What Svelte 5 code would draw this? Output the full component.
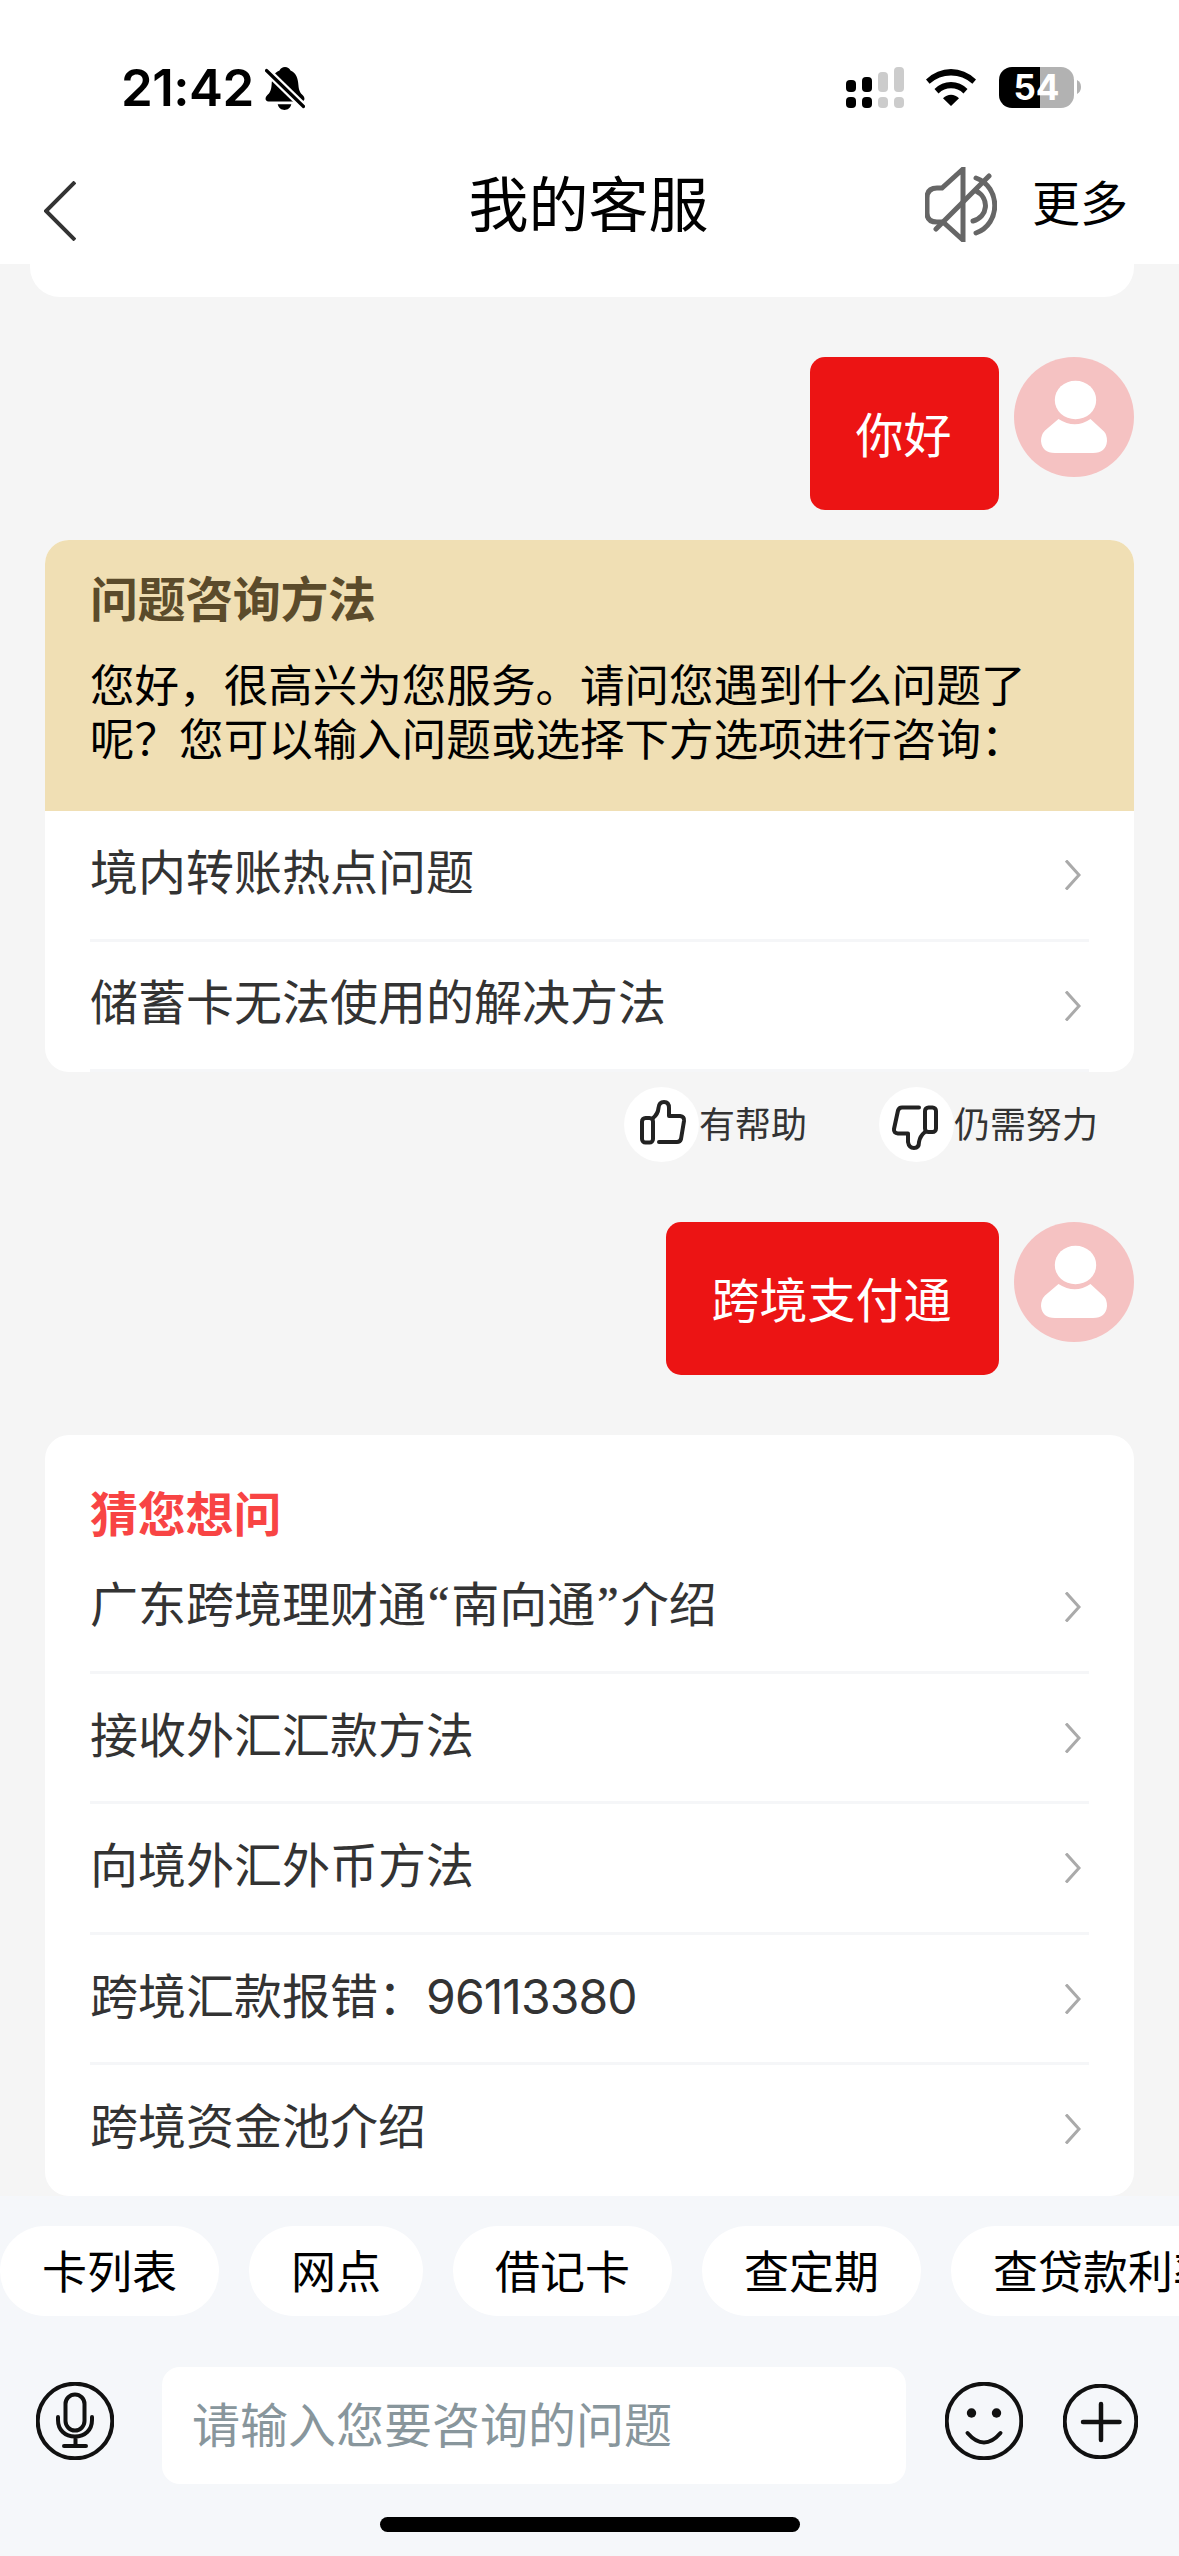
<script lang="ts">
  const greetingOptions = ["境内转账热点问题", "储蓄卡无法使用的解决方法"];

  const suggestions = [
    "广东跨境理财通“南向通”介绍",
    "接收外汇汇款方法",
    "向境外汇外币方法",
    "跨境汇款报错：96113380",
    "跨境资金池介绍",
  ];

  const shortcuts = ["卡列表", "网点", "借记卡", "查定期", "查贷款利率"];

  // Quotes and digits get their own spacing next to the Chinese glyphs.
  function splitRuns(text: string) {
    return text
      .split(/(\d+|[“”])/)
      .filter((part) => part !== "")
      .map((part) => ({
        text: part,
        quote: /[“”]/.test(part),
        digits: /\d/.test(part),
      }));
  }
</script>

{#snippet userMessage(text: string)}
  <div class="message">
    <div class="bubble">{text}</div>
    <svg class="avatar" viewBox="0 0 120 120" aria-hidden="true">
      <circle cx="60" cy="60" r="60" fill="#f5c2c2" />
      <ellipse cx="61.5" cy="43" rx="20.7" ry="19.3" fill="#fff" />
      <path
        d="M44.500 62 Q61 72.500 76.500 62 L90 74.500 Q93 77.500 93 84 Q92 96 79 96 H41 Q28 96 27 84 Q27 77.500 31 73.500 Z"
        fill="#fff"
      />
    </svg>
  </div>
{/snippet}

{#snippet optionRows(items: string[])}
  <ul class="options">
    {#each items as item}
      <li>
        <div class="label">
          {#each splitRuns(item) as run}<span class:quote={run.quote} class:digits={run.digits}>{run.text}</span>{/each}
        </div>
        <svg class="chevron" viewBox="0 0 16 30" aria-hidden="true">
          <path d="M1 .5 14 15 1 29.500" />
        </svg>
      </li>
    {/each}
  </ul>
{/snippet}

<div class="screen">
  <header>
    <div class="status-bar">
      <div class="clock">
        <span class="time">21:42</span>
        <svg class="bell" viewBox="0 0 40 43" aria-hidden="true">
          <path
            d="M20 0C17.500 0 15.500 1.300 14.500 3.400 8.500 5.500 7 11 6.600 18 6.200 24 4.500 26 2 28.500 0 30.500-.3 34.500 3.500 34.500H36.500C40.300 34.500 40 30.500 38 28.500 35.500 26 33.800 24 33.400 18 33 11 31 5.500 25.500 3.400 24.500 1.300 22.500 0 20 0ZM12.700 37.300C13.500 41 16.500 43 19.500 43S25.500 41 26.300 37.300Z"
          />
          <path d="M1.500 3.500 38.500 39.500" stroke="#fff" stroke-width="8" />
          <path d="M1.500 3.500 38.500 39.500" stroke="#000" stroke-width="3.200" stroke-linecap="round" />
        </svg>
      </div>
      <div class="indicators">
        <svg class="signal" viewBox="0 0 58 41" aria-hidden="true">
          <rect x="0" y="13" width="10" height="12" rx="4" />
          <rect x="16" y="10" width="10" height="15" rx="4" />
          <rect x="0" y="30" width="10" height="11" rx="4" />
          <rect x="16" y="30" width="10" height="11" rx="4" />
          <g fill="#ccc">
            <rect x="32" y="5" width="10" height="20" rx="4" />
            <rect x="48" y="0" width="10" height="25" rx="4" />
            <rect x="32" y="30" width="10" height="11" rx="4" />
            <rect x="48" y="30" width="10" height="11" rx="4" />
          </g>
        </svg>
        <svg class="wifi" viewBox="0 0 50 37" aria-hidden="true">
          <path
            d="M0 10.500Q11 0 25 0T50 10.500L46.400 14.700Q37 6.500 25 6.500T3.600 14.700ZM8.500 20Q15.500 13 25 13T41.500 20L37.500 24.400Q32 19.300 25 19.300T12.500 24.400ZM17 29.300Q20.500 25.800 25 25.800T33 29.300L25 37Z"
          />
        </svg>
        <div class="battery"><span>54</span></div>
        <svg class="battery-tip" viewBox="0 0 4 14" aria-hidden="true">
          <path d="M0 0Q4 2 4 7T0 14Z" fill="#b2b2b2" />
        </svg>
      </div>
    </div>
    <nav>
      <svg class="back" viewBox="0 0 32 60" aria-hidden="true">
        <path d="M31 1 2 30 31 59" />
      </svg>
      <h1>我的客服</h1>
      <div class="nav-actions">
        <svg class="muted" viewBox="0 0 72 75" aria-hidden="true">
          <path d="M38 2 17 21H12Q2 21 2 31V46Q2 55 12 55H18L38 73Z" />
          <path d="M11 62 64 9M51 11C76 20 76 57 51 66M51 24C65 31 63 50 48 54" />
        </svg>
        <span>更多</span>
      </div>
    </nav>
  </header>

  <main>
    <div class="previous-card"></div>

    {@render userMessage("你好")}

    <section class="card greeting">
      <div class="greeting-head">
        <h2>问题咨询方法</h2>
        <p>您好，很高兴为您服务。请问您遇到什么问题了<br />呢？您可以输入问题或选择下方选项进行咨询：</p>
      </div>
      {@render optionRows(greetingOptions)}
    </section>

    <div class="feedback">
      <div class="feedback-item">
        <span class="thumb">
          <svg viewBox="0 0 75 75" aria-hidden="true">
            <path
              d="M35 55H53Q56 55 57 52L60 34Q60.500 29.500 56 29H45V21Q45 15 40 15T34.500 21Q34 27 29 31"
            />
            <rect x="18" y="31" width="11" height="24.500" rx="3.500" />
          </svg>
        </span>
        有帮助
      </div>
      <div class="feedback-item">
        <span class="thumb">
          <svg viewBox="0 0 75 75" aria-hidden="true">
            <path
              d="M40 20.500H23Q20 20.500 19 23.500L15 42Q14.500 46 19 46.500H29V55Q30 61 35 61T40 55Q41 49 46 45"
            />
            <rect x="46" y="20.500" width="11" height="24.500" rx="3.500" />
          </svg>
        </span>
        仍需努力
      </div>
    </div>

    {@render userMessage("跨境支付通")}

    <section class="card guess">
      <h2>猜您想问</h2>
      {@render optionRows(suggestions)}
    </section>
  </main>

  <footer>
    <div class="shortcuts">
      {#each shortcuts as shortcut}
        <span class="pill">{shortcut}</span>
      {/each}
    </div>
    <div class="composer">
      <svg class="icon" viewBox="0 0 78 78" aria-hidden="true">
        <circle cx="39" cy="39" r="37.300" />
        <rect x="29.500" y="12.500" width="19" height="36" rx="9.500" />
        <path d="M22 35V38C22 48 29 54.500 39 54.500S56 48 56 38V35M39.500 55V64M28 64H50" stroke-linecap="round" />
      </svg>
      <div class="input">请输入您要咨询的问题</div>
      <svg class="icon smile" viewBox="0 0 78 78" aria-hidden="true">
        <circle cx="39" cy="39" r="37.300" />
        <circle cx="26.500" cy="31" r="4.700" fill="#111" stroke="none" />
        <circle cx="51.500" cy="31" r="4.700" fill="#111" stroke="none" />
        <path d="M22.500 51Q39 70 55.500 51" stroke-linecap="round" />
      </svg>
      <svg class="icon plus" viewBox="0 0 75 75" aria-hidden="true">
        <circle cx="37.500" cy="37.500" r="35.800" />
        <path d="M38 20V56M20 38H56.500" stroke-width="4.500" stroke-linecap="round" />
      </svg>
    </div>
    <div class="home-indicator"></div>
  </footer>
</div>

<style>
  :global(body) {
    margin: 0;
    background: #f5f5f5;
  }

  .screen {
    width: 1179px;
    height: 2556px;
    display: flex;
    flex-direction: column;
    overflow: hidden;
    background: #f5f5f5;
    color: #000;
    font-family: Inter, "Noto Sans CJK SC", sans-serif;
    font-size: 48px;
    font-weight: 400;
  }

  svg {
    display: block;
    flex: none;
    fill: none;
  }

  h1,
  h2,
  p,
  ul {
    margin: 0;
    padding: 0;
  }

  header {
    height: 264px;
    flex: none;
    background: #fff;
  }

  .status-bar {
    height: 151px;
    box-sizing: border-box;
    padding: 67px 98px 0 121px;
    display: flex;
    justify-content: space-between;
    align-items: flex-start;
  }

  .clock,
  .indicators {
    display: flex;
    height: 43px;
  }

  .time {
    width: 144px;
    font-size: 51px;
    font-weight: 600;
    line-height: 42px;
    white-space: nowrap;
    letter-spacing: -0.5px;
  }

  .bell {
    width: 40px;
    height: 43px;
    fill: #000;
  }

  .signal {
    width: 58px;
    height: 41px;
    fill: #000;
  }

  .wifi {
    width: 50px;
    height: 37px;
    margin: 2px 23px 0 22px;
    fill: #000;
  }

  .battery {
    width: 75px;
    height: 41px;
    border-radius: 13px;
    background: linear-gradient(to right, #000 41px, #b2b2b2 41px);
    color: #fff;
    font-size: 35px;
    font-weight: 700;
    line-height: 41px;
    text-align: center;
  }

  .battery-tip {
    width: 4px;
    height: 14px;
    margin: 13px 0 0 3px;
  }

  nav {
    height: 113px;
    display: grid;
    grid-template-columns: 1fr auto 1fr;
    align-items: center;
    padding: 0 48px 0 44px;
  }

  .back {
    width: 32px;
    height: 60px;
    margin-top: 3px;
    stroke: #333;
    stroke-width: 4;
  }

  h1 {
    font-size: 60px;
    font-weight: 400;
    line-height: 108px;
    margin: 0 -1px 8px 1px;
  }

  .nav-actions {
    display: flex;
    justify-content: flex-end;
    align-items: center;
    gap: 35px;
    line-height: 100px;
    margin: 0 3px 10px 0;
  }

  .muted {
    width: 72px;
    height: 75px;
    stroke: #666;
    stroke-width: 5;
    stroke-linecap: round;
  }

  main {
    height: 1932px;
    flex: none;
  }

  .previous-card {
    height: 33px;
    margin: 0 45px 60px 30px;
    border-radius: 0 0 30px 30px;
    background: #fff;
  }

  .message {
    display: flex;
    justify-content: flex-end;
    align-items: flex-start;
    gap: 15px;
    margin-right: 45px;
  }

  .bubble {
    height: 153px;
    padding: 0 47.500px 0 45.500px;
    border-radius: 15px;
    background: #ec1414;
    color: #fff;
    line-height: 158px;
  }

  .avatar {
    width: 120px;
    height: 120px;
  }

  .card {
    margin: 0 45px;
    border-radius: 24px;
    background: #fff;
    overflow: hidden;
  }

  h2 {
    font-size: 48px;
    font-weight: 600;
    line-height: 60px;
    letter-spacing: -0.200px;
  }

  .greeting {
    margin-top: 30px;
  }

  .greeting-head {
    height: 271px;
    box-sizing: border-box;
    padding: 30px 45px 0;
    background: #f0dfb4;
  }

  .greeting-head h2 {
    color: #5b4b2b;
    letter-spacing: -0.400px;
  }

  .greeting-head p {
    margin-top: 29px;
    font-size: 44.550px;
    line-height: 54px;
    white-space: nowrap;
  }

  .options {
    list-style: none;
    padding: 0 45px;
    color: #333;
  }

  .options li {
    height: 127.500px;
    display: flex;
    justify-content: space-between;
    align-items: center;
    padding-right: 8px;
    border-bottom: 3px solid #f5f6f8;
  }

  .options .label {
    margin-top: -3px;
    line-height: 70px;
    white-space: nowrap;
  }

  .greeting .label {
    margin-top: -4px;
  }

  .quote {
    position: relative;
    top: -2px;
    padding: 0 2px;
    font-family: "Liberation Serif", serif;
    line-height: 1;
    -webkit-text-stroke: 0.600px #333;
  }

  .digits {
    letter-spacing: -0.900px;
  }

  .chevron {
    width: 16px;
    height: 30px;
    margin-top: 1px;
    stroke: #aaa;
    stroke-width: 3;
  }

  .feedback {
    height: 75px;
    margin: 15px 81px 60px 0;
    display: flex;
    justify-content: flex-end;
    gap: 72px;
    color: #333;
    font-size: 36px;
    line-height: 77px;
  }

  .feedback-item {
    display: flex;
  }

  .thumb {
    width: 75px;
    height: 75px;
    border-radius: 50%;
    background: #fff;
  }

  .thumb svg {
    stroke: #222;
    stroke-width: 4;
    stroke-linecap: round;
    stroke-linejoin: round;
  }

  .guess {
    margin-top: 60px;
    height: 761px;
  }

  .guess h2 {
    padding: 50px 45px 0;
    margin-bottom: -2px;
    color: #f84444;
  }

  .guess .options li:last-child {
    border-bottom: 0;
  }

  footer {
    flex: 1;
    background: #f5f7fa;
  }

  .shortcuts {
    display: flex;
    gap: 30px;
    padding-top: 30px;
    overflow: hidden;
  }

  .pill {
    flex: none;
    height: 90px;
    padding: 0 42px;
    border-radius: 45px;
    background: #fff;
    font-size: 45px;
    line-height: 93px;
  }

  .composer {
    display: flex;
    align-items: center;
    height: 117px;
    margin-top: 51px;
    padding: 0 41px 0 36px;
  }

  .icon {
    width: 78px;
    height: 78px;
    margin-bottom: 9px;
    stroke: #111;
    stroke-width: 4;
  }

  .input {
    width: 744px;
    height: 117px;
    box-sizing: border-box;
    margin: 0 39px 0 48px;
    padding-left: 30px;
    border-radius: 18px;
    background: #fff;
    color: #88969c;
    line-height: 117px;
  }

  .plus {
    width: 75px;
    height: 75px;
    margin-left: 40px;
  }

  .home-indicator {
    width: 420px;
    height: 15px;
    margin: 33px auto 0;
    border-radius: 8px;
    background: #000;
  }
</style>
